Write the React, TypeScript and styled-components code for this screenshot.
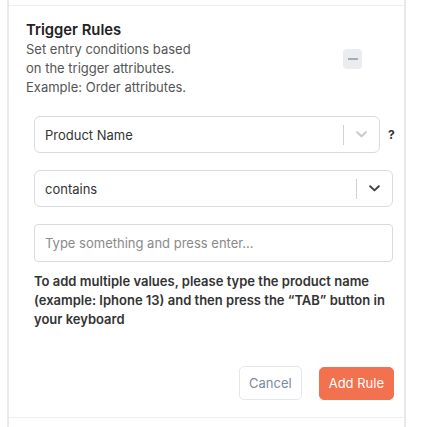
import React from 'react';
import styled, {createGlobalStyle} from "styled-components";

const GlobalStyle = createGlobalStyle`
  body {
    margin: 0;
    background: #ffffff;
    font-family: Inter, "Noto Sans", "Liberation Sans", sans-serif;
    color: #333333;
  }
`

const CSSPanel = styled.div`
  margin-left: 7px;
  width: 395px;
  border-left: 2px solid #e6eaef;
  border-right: 2px solid #e6eaef;
`

const CSSEdge = styled.div<{ $top?: boolean }>`
  height: ${p => p.$top ? '5px' : '9px'};
  border-${p => p.$top ? 'bottom' : 'top'}: 1.5px solid #eceef1;
`

const CSSSection = styled.div`
  padding: 15px 10px 17px 17px;
`

const CSSHeader = styled.div`
  display: flex;
  align-items: center;
  justify-content: space-between;
  padding-right: 32px;

  h2 {
    margin: 0;
    font-size: 14.8px;
    line-height: 19px;
    font-weight: 600;
    color: #222;
  }

  p {
    margin: 0;
    font-size: 13px;
    line-height: 19px;
    color: #555;
    max-width: 176px;
  }
`

const CSSCollapse = styled.button`
  width: 19px;
  height: 20px;
  border: none;
  border-radius: 4px;
  background: #ebecef;
  padding: 0;
  display: flex;
  align-items: center;
  justify-content: center;

  &:after {
    content: '';
    width: 10px;
    height: 2px;
    background: #a9acb0;
  }
`

const CSSFields = styled.div`
  margin: 19px 1px 0 8px;
  display: flex;
  flex-direction: column;
  gap: 17px;
`

const CSSRow = styled.div`
  display: flex;
  align-items: center;
  gap: 8px;

  .hint {
    font-size: 12px;
    font-weight: 700;
    color: #333;
    width: 5px;
  }
`

const CSSSelect = styled.div<{ $muted?: boolean }>`
  flex: 1;
  height: 37px;
  box-sizing: border-box;
  border: 1px solid #d8dbdf;
  border-radius: 6px;
  display: flex;
  align-items: center;
  font-size: 13px;
  color: #333;

  .value {
    flex: 1;
    padding-left: 10px;
  }

  .sep {
    width: 1px;
    height: 20px;
    background: #d0d0d0;
  }

  .arrow {
    width: 35px;
    display: flex;
    justify-content: center;
    color: ${p => p.$muted ? '#c9c9c9' : '#444'};
  }
`

const CSSInput = styled.input`
  height: 38px;
  box-sizing: border-box;
  border: 1px solid #d8dbdf;
  border-radius: 4px;
  padding: 0 10px;
  font-family: inherit;
  font-size: 13px;
  color: #333;
  outline: none;

  &::placeholder {
    color: #8a8a8a;
  }
`

const CSSHelp = styled.div`
  margin: -7px 0 0;
  font-size: 13px;
  line-height: 19px;
  font-weight: 600;
  color: #333;
`

const CSSActions = styled.div`
  margin-top: 37px;
  display: flex;
  justify-content: flex-end;
  align-items: center;
  gap: 17px;
`

const CSSButton = styled.button<{ $primary?: boolean }>`
  height: ${p => p.$primary ? '33px' : '34px'};
  padding: 0 9px;
  border-radius: 5px;
  font-family: inherit;
  font-size: 13px;
  border: 1px solid ${p => p.$primary ? '#f2714f' : '#e4e7eb'};
  background: ${p => p.$primary ? '#f2714f' : '#fff'};
  color: ${p => p.$primary ? '#fff' : '#7c8a9c'};
`

const Chevron = () => (
    <svg width="11" height="7" viewBox="0 0 11 7" fill="none">
        <path d="M1.2 1.2 L5.5 5.4 L9.8 1.2" stroke="currentColor" strokeWidth="2" strokeLinecap="round" strokeLinejoin="round"/>
    </svg>
);

const TriggerRules = () => {
    return (
        <CSSPanel>
            <CSSEdge $top/>
            <CSSSection>
                <CSSHeader>
                    <div>
                        <h2>Trigger Rules</h2>
                        <p>Set entry conditions based on the trigger attributes. Example: Order attributes.</p>
                    </div>
                    <CSSCollapse aria-label="collapse"/>
                </CSSHeader>
                <CSSFields>
                    <CSSRow>
                        <CSSSelect $muted>
                            <span className="value">Product Name</span>
                            <span className="sep"/>
                            <span className="arrow"><Chevron/></span>
                        </CSSSelect>
                        <span className="hint">?</span>
                    </CSSRow>
                    <CSSRow>
                        <CSSSelect>
                            <span className="value">contains</span>
                            <span className="sep"/>
                            <span className="arrow"><Chevron/></span>
                        </CSSSelect>
                    </CSSRow>
                    <CSSInput placeholder="Type something and press enter..."/>
                    <CSSHelp>
                        To add multiple values, please type the product name (example: Iphone 13) and then
                        press the “TAB” button in your keyboard
                    </CSSHelp>
                </CSSFields>
                <CSSActions>
                    <CSSButton>Cancel</CSSButton>
                    <CSSButton $primary>Add Rule</CSSButton>
                </CSSActions>
            </CSSSection>
            <CSSEdge/>
        </CSSPanel>
    );
};

const App = () => (
    <>
        <GlobalStyle/>
        <TriggerRules/>
    </>
);

export default App;
